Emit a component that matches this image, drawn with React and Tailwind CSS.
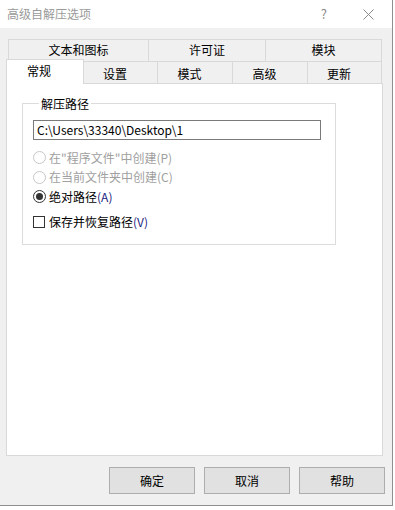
const TOP_TABS = [
  { label: '文本和图标', w: 'w-[140px]' },
  { label: '许可证', w: 'w-[117px]' },
  { label: '模块', w: 'w-[117px]' },
]

const BOTTOM_TABS = [
  { label: '设置', w: 'w-[73px]' },
  { label: '模式', w: 'w-[75px]' },
  { label: '高级', w: 'w-[75px]' },
  { label: '更新', w: 'w-[75px]' },
]

function Radio({ checked, disabled, label, hotkey }) {
  return (
    <div className="flex h-[19.5px] items-center">
      <span
        className={`flex h-[13px] w-[13px] items-center justify-center rounded-full border bg-white ${
          disabled ? 'border-[#c8c8c8]' : 'border-[#333333]'
        }`}
      >
        {checked && <span className="h-[7px] w-[7px] rounded-full bg-[#333333]" />}
      </span>
      <span className={`ml-[3px] ${disabled ? 'text-[#a0a0a0]' : 'text-black'}`}>
        {label}
        <span className={disabled ? '' : 'text-[#1a237e]'}>({hotkey})</span>
      </span>
    </div>
  )
}

export default function App() {
  return (
    <div
      className="h-[510px] w-[395px] bg-white text-[12px] text-black"
      style={{ fontFamily: '"Noto Sans CJK SC", "Noto Sans", sans-serif' }}
    >
      <div className="flex h-[506px] w-[393px] flex-col border-b border-r border-[#8f8f8f]">
        {/* title bar */}
        <div className="flex h-[28px] items-center bg-white pl-[7px] text-[#9a9a9a]">
          <span className="flex-1 text-[12px]">高级自解压选项</span>
          <span className="mr-[36px] text-[13px] text-[#8a8a8a]">?</span>
          <svg className="mr-[18px] h-[11px] w-[11px]" viewBox="0 0 11 11" fill="none" stroke="#8a8a8a" strokeWidth="1">
            <path d="M0.5 0.5l10 10M10.5 0.5l-10 10" />
          </svg>
        </div>

        <div className="flex flex-1 flex-col bg-[#f0f0f0] px-[6px] pt-[11px]">
          {/* tab row 1 */}
          <div className="ml-[2px] flex h-[22px]">
            {TOP_TABS.map((t, i) => (
              <div
                key={t.label}
                className={`flex ${t.w} items-center justify-center border-l border-t border-[#d9d9d9] pb-[1px] ${
                  i === TOP_TABS.length - 1 ? 'border-r' : ''
                }`}
              >
                {t.label}
              </div>
            ))}
          </div>

          {/* tab row 2 */}
          <div className="relative z-10 flex h-[22px] items-end">
            <div className="-mb-px flex h-[25px] w-[78px] items-start justify-center border-l border-r border-t border-[#d9d9d9] bg-white pr-[12px] pt-[2px]">
              常规
            </div>
            {BOTTOM_TABS.map((t, i) => (
              <div
                key={t.label}
                className={`flex h-[22px] ${t.w} items-center justify-center border-t border-[#d9d9d9] pr-[11px] pt-[2px] ${
                  i === 0 ? '' : 'border-l'
                } ${i === BOTTOM_TABS.length - 1 ? 'border-r' : ''}`}
              >
                {t.label}
              </div>
            ))}
          </div>

          {/* panel */}
          <div className="mr-[3px] h-[373px] border border-[#d9d9d9] bg-white pl-[15px] pt-[12px]">
            <fieldset className="h-[149px] w-[314px] border border-[#dcdcdc] pl-[10px]">
              <legend className="ml-[6px] px-[2px] leading-[15px]">解压路径</legend>
              <div className="mt-[9px] flex h-[20px] w-[288px] items-center border border-[#7a7a7a] pl-[3px]">
                C:\Users\33340\Desktop\1
              </div>
              <div className="mt-[8px]">
                <Radio disabled label={'在"程序文件"中创建'} hotkey="P" />
                <Radio disabled label="在当前文件夹中创建" hotkey="C" />
                <Radio checked label="绝对路径" hotkey="A" />
              </div>
              <div className="mt-[6px] flex items-center">
                <span className="h-[12px] w-[12px] border border-[#333333] bg-white" />
                <span className="ml-[4px]">
                  保存并恢复路径<span className="text-[#1a237e]">(V)</span>
                </span>
              </div>
            </fieldset>
          </div>

          {/* buttons */}
          <div className="mr-[1px] mt-[11px] flex justify-end gap-[9px]">
            {['确定', '取消', '帮助'].map(b => (
              <button
                key={b}
                className="flex h-[27px] w-[86px] items-center justify-center border border-[#adadad] bg-[#e1e1e1] text-[12px]"
              >
                {b}
              </button>
            ))}
          </div>
        </div>
      </div>
    </div>
  )
}
